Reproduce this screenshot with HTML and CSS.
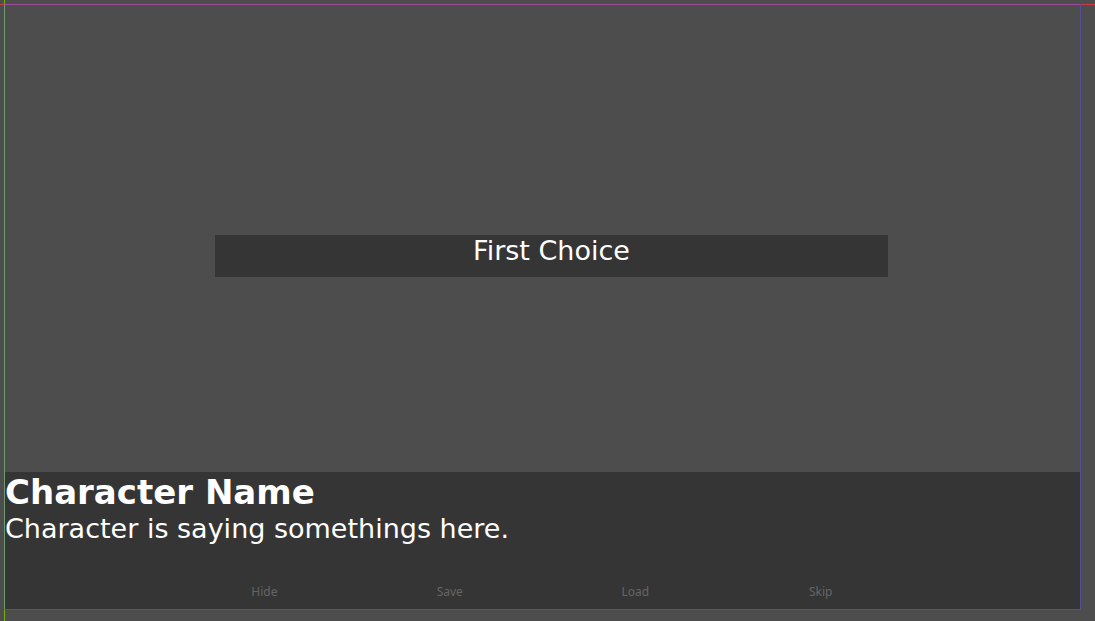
FILE: index.html
```html
<!DOCTYPE html>
<html lang="en">
<head>
<meta charset="utf-8">
<title>Dialogue</title>
<link rel="stylesheet" href="styles.css">
</head>
<body>
<div class="axis axis-x"></div>
<div class="axis axis-y"></div>
<main class="frame">
  <section class="stage">
    <button class="choice" type="button">First Choice</button>
  </section>
  <section class="dialogue">
    <h1 class="speaker">Character Name</h1>
    <p class="line">Character is saying somethings here.</p>
    <nav class="menu">
      <button class="menu-item" type="button">Hide</button>
      <button class="menu-item" type="button">Save</button>
      <button class="menu-item" type="button">Load</button>
      <button class="menu-item" type="button">Skip</button>
    </nav>
  </section>
</main>
</body>
</html>
```
FILE: styles.css
```css
* {
  box-sizing: border-box;
}

body {
  margin: 0;
  min-height: 100vh;
  display: flex;
  padding: 4px 14px 11px 4px;
  position: relative;
  background: #4d4d4d;
  color: #fff;
  font-family: "DejaVu Sans", sans-serif;
}

/* Editor axes, running past the edges of the canvas frame */
.axis {
  position: absolute;
}

.axis-x {
  top: 4px;
  left: 0;
  right: 0;
  height: 1px;
  background: #cf3a46;
}

.axis-y {
  top: 0;
  bottom: 0;
  left: 4px;
  width: 1px;
  background: #76b000;
}

.frame {
  position: relative;
  flex: 1;
  display: flex;
  flex-direction: column;
  border: 1px solid #54509a;
  border-top-color: #a0489a;
  border-left-color: #6f9a70;
}

.stage {
  flex: 1;
  display: flex;
  align-items: center;
  justify-content: center;
  padding: 35px 0 0 18px;
}

.choice {
  width: 673px;
  max-width: 100%;
  padding: 0 0 10px;
  border: 0;
  background: #353535;
  color: #fff;
  font: 27px/32px "DejaVu Sans", sans-serif;
}

.dialogue {
  min-height: 137px;
  display: flex;
  flex-direction: column;
  background: #353535;
}

.speaker {
  margin: 0;
  font-size: 34px;
  line-height: 40px;
}

.line {
  margin: 0;
  font-size: 27px;
  line-height: 34px;
}

.menu {
  width: 69%;
  margin: auto auto 7px;
  display: grid;
  grid-template-columns: repeat(4, 1fr);
}

.menu-item {
  padding: 0;
  border: 0;
  background: none;
  color: #656565;
  font: 12px/20px "Noto Sans", sans-serif;
}
```
